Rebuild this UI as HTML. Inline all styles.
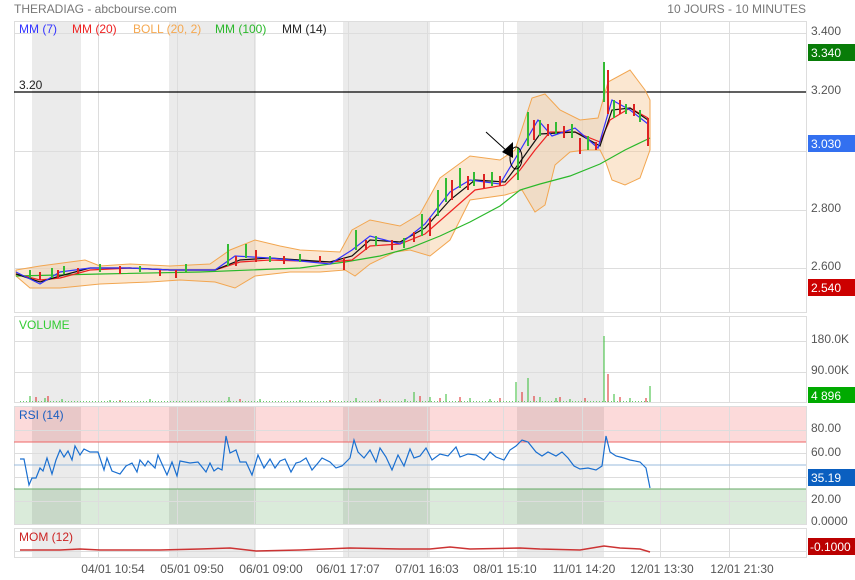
<!DOCTYPE html>
<html><head><meta charset="utf-8"><style>
html,body{margin:0;padding:0;background:#fff;width:855px;height:580px;overflow:hidden}
svg{display:block;font-family:"Liberation Sans",Arial,sans-serif}
</style></head><body>
<svg width="855" height="580" viewBox="0 0 855 580" xmlns="http://www.w3.org/2000/svg">
<text x="14" y="13" font-size="12" fill="#777">THERADIAG - abcbourse.com</text>
<text x="806" y="13" font-size="12" fill="#777" text-anchor="end">10 JOURS - 10 MINUTES</text>

<g fill="#ebebeb">
<rect x="32" y="21" width="49" height="291"/><rect x="169" y="21" width="87" height="291"/><rect x="343" y="21" width="87" height="291"/><rect x="517" y="21" width="87" height="291"/>
<rect x="32" y="316" width="49" height="86"/><rect x="169" y="316" width="87" height="86"/><rect x="343" y="316" width="87" height="86"/><rect x="517" y="316" width="87" height="86"/>
<rect x="32" y="528" width="49" height="29"/><rect x="169" y="528" width="87" height="29"/><rect x="343" y="528" width="87" height="29"/><rect x="517" y="528" width="87" height="29"/>
</g>
<rect x="14" y="406" width="792" height="36" fill="#fbd4d4" fill-opacity="0.85"/>
<rect x="14" y="489" width="792" height="35" fill="#d3e8d3" fill-opacity="0.85"/>
<g fill="#000" fill-opacity="0.08">
<rect x="32" y="406" width="49" height="118"/><rect x="169" y="406" width="87" height="118"/><rect x="343" y="406" width="87" height="118"/><rect x="517" y="406" width="87" height="118"/>
</g>

<g stroke="#ddd" stroke-width="1" fill="none">
<path d="M98.5 21V312M177.5 21V312M254.5 21V312M348.5 21V312M427.5 21V312M503.5 21V312M582.5 21V312M660.5 21V312M729.5 21V312"/>
<path d="M98.5 316V402M177.5 316V402M254.5 316V402M348.5 316V402M427.5 316V402M503.5 316V402M582.5 316V402M660.5 316V402M729.5 316V402"/>
<path d="M98.5 406V524M177.5 406V524M254.5 406V524M348.5 406V524M427.5 406V524M503.5 406V524M582.5 406V524M660.5 406V524M729.5 406V524"/>
<path d="M98.5 528V557M177.5 528V557M254.5 528V557M348.5 528V557M427.5 528V557M503.5 528V557M582.5 528V557M660.5 528V557M729.5 528V557"/>
<path d="M14 33.5H806M14 151.5H806M14 210.5H806M14 268.5H806"/>
<path d="M14 341.5H806M14 372.5H806"/>
<path d="M14 430.5H806M14 453.5H806M14 477.5H806M14 501.5H806"/>
<path d="M14 551.5H806"/>
<rect x="14.5" y="21.5" width="792" height="291"/>
<rect x="14.5" y="316.5" width="792" height="86"/>
<rect x="14.5" y="406.5" width="792" height="118"/>
<rect x="14.5" y="528.5" width="792" height="29"/>
</g>

<line x1="14" y1="92" x2="806" y2="92" stroke="#000" stroke-width="1.2"/>
<text x="19" y="89" font-size="12" fill="#222">3.20</text>

<path d="M16 270 L40 266 L70 262 L85 260 L100 266 L130 264 L170 266 L210 264 L230 250 L255 240 L280 246 L300 250 L340 252 L352 230 L370 220 L400 226 L420 214 L440 178 L470 156 L500 160 L515 150 L532 98 L545 94 L560 110 L580 120 L598 118 L608 82 L630 70 L645 90 L650 100 L650 150 L640 178 L625 185 L612 180 L605 160 L600 150 L585 150 L570 152 L555 165 L545 205 L535 212 L522 190 L505 195 L470 200 L450 240 L430 256 L410 250 L395 252 L370 264 L355 276 L345 270 L320 272 L290 272 L255 276 L235 288 L215 282 L180 280 L150 282 L100 284 L60 288 L30 288 L16 276 Z" fill="#f7c99a" fill-opacity="0.45" stroke="#f2a650" stroke-width="1"/>

<path d="M16 276 L100 274 L200 272 L300 268 L345 262 L380 256 L410 248 L440 236 L470 222 L500 206 L520 190 L540 184 L570 176 L600 164 L625 150 L650 138" fill="none" stroke="#2ab82a" stroke-width="1.2"/>
<path d="M16 274 L40 280 L60 278 L90 270 L130 268 L170 270 L215 270 L240 262 L270 260 L330 262 L352 260 L370 246 L400 244 L425 234 L450 212 L475 190 L505 185 L520 170 L535 150 L550 132 L575 132 L600 142 L610 120 L630 108 L648 118" fill="none" stroke="#e22" stroke-width="1.2"/>
<path d="M16 274 L40 282 L60 276 L90 268 L130 268 L170 270 L215 270 L240 260 L270 258 L330 262 L352 256 L370 240 L400 242 L425 228 L450 200 L475 180 L505 182 L520 162 L540 134 L575 132 L600 146 L612 110 L630 108 L648 120" fill="none" stroke="#111" stroke-width="1.2"/>
<path d="M16 272 L40 284 L60 272 L90 268 L130 268 L170 270 L215 270 L235 256 L270 258 L330 264 L352 250 L370 236 L400 244 L425 224 L450 192 L470 180 L500 184 L518 154 L538 120 L552 136 L575 128 L598 148 L612 100 L630 110 L648 124" fill="none" stroke="#33f" stroke-width="1.2"/>

<g stroke-width="2">
<path d="M30 270v8M52 268v10M64 266v8M100 264v8M140 266v6M186 264v8M228 244v22M246 244v14M270 256v6M300 254v8M356 230v20M376 236v10M404 238v10M422 214v22M438 190v26M446 178v24M460 168v20M474 172v14M492 172v14M518 148v32M528 112v34M540 120v16M556 122v12M572 124v14M588 136v14M604 62v40M614 100v18M626 104v10M640 110v12" stroke="#3b3"/>
<path d="M40 272v8M58 270v8M78 268v6M120 266v8M160 270v6M176 270v8M236 256v10M256 250v12M284 256v8M320 256v6M344 258v12M366 240v10M392 240v10M414 232v10M430 218v18M452 180v20M468 176v14M484 174v14M500 176v10M534 120v20M548 124v12M564 126v12M580 138v16M596 142v8M608 70v44M620 100v14M634 104v12M648 118v28" stroke="#d22"/>
</g>

<line x1="486" y1="132" x2="508" y2="152" stroke="#000" stroke-width="1"/>
<path d="M502 152 L513 142 L513 158 Z" fill="#000"/>
<ellipse cx="516" cy="158" rx="6" ry="11" fill="none" stroke="#000" stroke-width="1"/>

<text y="33" font-size="12"><tspan x="19" fill="#33f">MM (7)</tspan><tspan x="72" fill="#e22">MM (20)</tspan><tspan x="133" fill="#f5a850">BOLL (20, 2)</tspan><tspan x="215" fill="#2ab82a">MM (100)</tspan><tspan x="282" fill="#222">MM (14)</tspan></text>

<text x="19" y="329" font-size="12" fill="#3c3">VOLUME</text>
<g stroke-width="1">
<path d="M30 402v-6M45 402v-4M62 402v-3M110 402v-2M150 402v-3M229 402v-5M260 402v-3M300 402v-2M356 402v-4M405 402v-3M414 402v-10M430 402v-5M446 402v-8M470 402v-4M490 402v-3M516 402v-20M528 402v-24M540 402v-5M556 402v-4M570 402v-3M604 402v-66M614 402v-8M630 402v-4M650 402v-16" stroke="#3b3"/>
<path d="M36 402v-5M48 402v-6M120 402v-2M240 402v-3M330 402v-2M380 402v-3M420 402v-6M440 402v-4M460 402v-5M500 402v-4M522 402v-10M534 402v-6M560 402v-5M585 402v-4M608 402v-28M620 402v-5M646 402v-4" stroke="#d22"/>
<path d="M20 401.5H650" stroke="#6c6" stroke-dasharray="1 2"/>
</g>

<line x1="14" y1="442" x2="806" y2="442" stroke="#e66" stroke-width="1"/>
<line x1="14" y1="465" x2="806" y2="465" stroke="#9bd" stroke-width="1"/>
<line x1="14" y1="489" x2="806" y2="489" stroke="#6a6" stroke-width="1"/>
<text x="19" y="419" font-size="12" fill="#1a5fc0">RSI (14)</text>
<path d="M20 459 L24 459 L29 485 L32 478 L36 478 L40 468 L43 471 L47 458 L52 474 L56 460 L60 450 L64 457 L68 451 L72 460 L75 446 L80 455 L84 449 L90 452 L98 452 L104 470 L107 458 L112 471 L120 474 L126 466 L132 463 L137 472 L140 460 L145 466 L148 461 L155 468 L158 455 L162 464 L167 475 L172 462 L177 476 L180 461 L190 463 L198 462 L202 467 L206 472 L210 463 L214 471 L218 468 L222 470 L226 436 L230 453 L236 450 L240 462 L246 462 L252 475 L258 455 L264 468 L270 459 L275 468 L280 461 L285 459 L291 472 L296 463 L300 462 L306 458 L312 470 L318 463 L322 458 L330 462 L336 468 L342 466 L350 458 L354 440 L358 452 L364 458 L370 450 L376 462 L380 448 L386 457 L392 470 L398 455 L404 466 L410 449 L414 458 L420 456 L426 448 L432 460 L440 454 L448 456 L456 447 L460 457 L468 454 L476 455 L484 460 L490 452 L496 457 L504 460 L510 450 L516 446 L522 440 L528 442 L536 452 L542 456 L548 452 L556 456 L562 452 L568 458 L574 466 L580 469 L588 468 L596 470 L602 466 L606 436 L610 452 L616 456 L624 458 L630 460 L640 462 L646 468 L650 488" fill="none" stroke="#1a6fd0" stroke-width="1.2"/>

<text x="19" y="541" font-size="12" fill="#c22">MOM (12)</text>
<path d="M20 550 L60 550 L80 549 L100 550 L160 550 L200 549 L230 548 L256 551 L300 550 L350 548 L400 549 L430 549 L450 547 L470 549 L520 548 L540 549 L580 550 L604 546 L620 548 L640 549 L650 552" fill="none" stroke="#c33" stroke-width="1.5"/>

<g font-size="12" fill="#555">
<text x="811" y="35">3.400</text>
<text x="811" y="94">3.200</text>
<text x="811" y="212">2.800</text>
<text x="811" y="270">2.600</text>
<text x="811" y="343">180.0K</text>
<text x="811" y="374">90.00K</text>
<text x="811" y="432">80.00</text>
<text x="811" y="456">60.00</text>
<text x="811" y="503">20.00</text>
<text x="811" y="525">0.0000</text>
</g>
<rect x="808" y="44" width="47" height="17" fill="#087c08"/><text x="811" y="57" font-size="12" fill="#fff">3.340</text>
<rect x="808" y="135" width="47" height="17" fill="#3370f0"/><text x="811" y="148" font-size="12" fill="#fff">3.030</text>
<rect x="808" y="279" width="47" height="17" fill="#c00"/><text x="811" y="292" font-size="12" fill="#fff">2.540</text>
<rect x="808" y="387" width="47" height="16" fill="#0a0"/><text x="811" y="400" font-size="12" fill="#fff">4 896</text>
<rect x="808" y="469" width="47" height="17" fill="#0a5fc0"/><text x="811" y="482" font-size="12" fill="#fff">35.19</text>
<rect x="808" y="538" width="47" height="17" fill="#b00"/><text x="810" y="551" font-size="12" fill="#fff">-0.1000</text>

<g font-size="12" fill="#555" text-anchor="middle">
<text x="113" y="573">04/01 10:54</text>
<text x="192" y="573">05/01 09:50</text>
<text x="271" y="573">06/01 09:00</text>
<text x="348" y="573">06/01 17:07</text>
<text x="427" y="573">07/01 16:03</text>
<text x="505" y="573">08/01 15:10</text>
<text x="584" y="573">11/01 14:20</text>
<text x="662" y="573">12/01 13:30</text>
<text x="742" y="573">12/01 21:30</text>
</g>
</svg>
</body></html>
